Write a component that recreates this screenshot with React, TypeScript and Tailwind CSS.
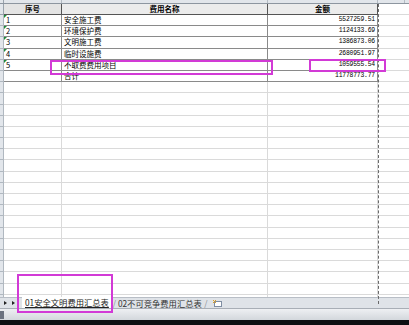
import React from "react";

const rows: [string, string, string][] = [
  ["1", "安全施工费", "5527259.51"],
  ["2", "环境保护费", "1124133.69"],
  ["3", "文明施工费", "1386873.06"],
  ["4", "临时设施费", "2680951.97"],
  ["5", "不取费费用项目", "1059555.54"],
  ["", "合计", "11778773.77"],
];

const empties = Array.from({ length: 22 }, (_, i) => i);

function Tri() {
  return (
    <div className="absolute left-0 top-0 w-0 h-0 border-t-[3px] border-t-[#1e8a3a] border-r-[3px] border-r-transparent" />
  );
}

export default function App() {
  return (
    <div className="relative flex flex-col w-[409px] h-[325px] overflow-hidden bg-white font-['Noto_Sans_CJK_SC','Noto_Sans',sans-serif] text-black">
      {/* column header strip */}
      <div className="flex h-[4px] shrink-0 bg-[#e2e6eb] border-b border-[#8d96a0]">
        <div className="w-[4px] border-r border-[#9aa3ad]" />
        <div className="w-[58px] border-r border-[#b5bcc4]" />
        <div className="w-[206px] border-r border-[#b5bcc4]" />
        <div className="w-[110px] border-r border-[#b5bcc4]" />
        <div className="w-[27px] border-r border-[#b5bcc4]" />
      </div>

      <div className="flex-1 flex flex-col overflow-hidden">
        {/* table header row */}
        <div className="flex h-[11px] shrink-0 text-[7.5px] font-bold leading-[10px]">
          <div className="w-[4px] bg-[#e2e6eb] border-r border-b border-[#9aa3ad]" />
          <div className="w-[58px] bg-[#e4e4e4] border-r border-b border-[#555] text-center">序号</div>
          <div className="w-[206px] bg-[#ececec] border-r border-b border-[#555] text-center">费用名称</div>
          <div className="w-[110px] bg-[#ececec] border-r border-b border-[#555] text-center">金额</div>
          <div className="flex-1 border-b border-[#dadada]" />
        </div>

        {rows.map(([n, name, amt], i) => (
          <div key={i} className="flex h-[11.2px] shrink-0 text-[7.5px] leading-[10px]">
            <div className="w-[4px] bg-[#e2e6eb] border-r border-b border-[#b0b8c0]" />
            <div className="relative w-[58px] border-r border-b border-[#8a8a8a] pl-[2px]">
              {n && <Tri />}
              {n}
            </div>
            <div className="w-[206px] border-r border-b border-[#8a8a8a] pl-[2px]">{name}</div>
            <div className="w-[110px] border-r border-b border-[#8a8a8a] pr-[2px] text-right font-['Liberation_Mono',monospace] text-[6.4px] tracking-[-0.2px] leading-[10px]">
              {amt}
            </div>
            <div className="flex-1 border-b border-[#dadada]" />
          </div>
        ))}

        {empties.map((i) => (
          <div key={i} className="flex h-[11.2px] shrink-0">
            <div className="w-[4px] bg-[#e2e6eb] border-r border-b border-[#b0b8c0]" />
            <div className="w-[58px] border-r border-b border-[#dadada]" />
            <div className="w-[206px] border-r border-b border-[#dadada]" />
            <div className="w-[110px] border-r border-b border-[#dadada]" />
            <div className="flex-1 border-b border-[#dadada]" />
          </div>
        ))}
      </div>

      {/* sheet tab bar */}
      <div className="flex items-stretch h-[11px] shrink-0 bg-[#dfe3e8] border-t border-[#b8bec6] text-[8.3px] leading-[10px]">
        <div className="flex items-center gap-[5px] pl-[4px] w-[22px]">
          <span className="w-0 h-0 border-y-[2.5px] border-y-transparent border-l-[3px] border-l-[#222]" />
          <span className="w-0 h-0 border-y-[2.5px] border-y-transparent border-l-[3px] border-l-[#222]" />
        </div>
        <div className="bg-white px-[3px] text-[#222] underline underline-offset-[1px] -mt-px">01安全文明费用汇总表</div>
        <div className="w-[5px] text-[#8a8f96] text-center">/</div>
        <div className="px-[1px] text-[#333]">02不可竞争费用汇总表</div>
        <div className="w-[6px] text-[#8a8f96] text-center">/</div>
        <div className="flex items-center pl-[3px]">
          <svg width="11" height="9" viewBox="0 0 11 9">
            <rect x="2.5" y="2.5" width="7" height="5" fill="#fff" stroke="#7f8ea3" />
            <path d="M1 1 L4 4 M4 1 L1 4" stroke="#e0a020" strokeWidth="1" />
          </svg>
        </div>
      </div>

      {/* status / scrollbar */}
      <div className="flex items-center h-[12px] shrink-0 bg-gradient-to-b from-[#eef0f3] to-[#d3d7dc] border-t border-[#a8aeb6]">
        <div className="w-[4px] h-[8px] bg-[#6b7280]" />
      </div>
      <div className="h-[5px] shrink-0 bg-[#0e0f12]" />

      {/* page break dashed line */}
      <div className="absolute left-[378px] top-[4px] h-[300px] border-l border-dashed border-[#6a6a6a]" />

      {/* magenta annotations */}
      <div className="absolute left-[50px] top-[60px] w-[223px] h-[15px] border-2 border-[#d23ad6]" />
      <div className="absolute left-[309px] top-[59px] w-[77px] h-[13px] border-2 border-[#d23ad6]" />
      <div className="absolute left-[17px] top-[274px] w-[96px] h-[39px] border-2 border-[#d23ad6]" />
    </div>
  );
}
